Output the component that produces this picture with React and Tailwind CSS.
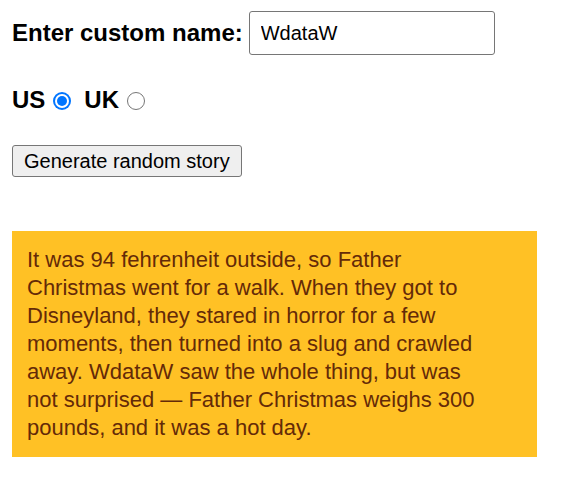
import React, { useState } from "react";

const Radio = ({ checked, onClick }) =>
  checked ? (
    <span
      onClick={onClick}
      className="inline-flex w-[18px] h-[18px] rounded-full bg-[#0075ff] p-[2px] cursor-pointer"
    >
      <span className="flex-1 rounded-full bg-white p-[2px] flex">
        <span className="flex-1 rounded-full bg-[#0075ff]" />
      </span>
    </span>
  ) : (
    <span
      onClick={onClick}
      className="inline-block w-[18px] h-[18px] rounded-full border-[1.5px] border-[#767676] bg-white cursor-pointer"
    />
  );

const App = () => {
  const [name, setName] = useState("WdataW");
  const [country, setCountry] = useState("us");

  return (
    <div className="px-3 pt-[11px] font-['Liberation_Sans',Arial,sans-serif] text-black bg-white min-h-[492px]">
      <div className="flex items-center">
        <label className="font-bold text-[24px] leading-[28px]">Enter custom name:</label>
        <input
          value={name}
          onChange={(e) => setName(e.target.value)}
          className="ml-[6px] w-[246px] h-[44px] border border-[#767676] rounded-[3px] px-[11px] text-[20px] outline-none"
        />
      </div>

      <div className="flex items-center h-[28px] mt-[31px] font-bold text-[24px] leading-[28px]">
        <span>US</span>
        <span className="ml-[8px] mt-[1px] flex">
          <Radio checked={country === "us"} onClick={() => setCountry("us")} />
        </span>
        <span className="ml-[13px]">UK</span>
        <span className="ml-[8px] mt-[1px] flex">
          <Radio checked={country === "uk"} onClick={() => setCountry("uk")} />
        </span>
      </div>

      <button className="block mt-[31px] h-[32px] px-[11px] bg-[#efefef] border border-[#767676] rounded-[3px] text-[20px] leading-[24px]">
        Generate random story
      </button>

      <p className="mt-[54px] w-[525px] bg-[#ffc125] text-[#642a08] text-[22px] leading-[28px] py-[15px] pl-[15px] pr-[48px]">
        It was 94 fehrenheit outside, so Father Christmas went for a walk. When they got to
        Disneyland, they stared in horror for a few moments, then turned into a slug and
        crawled away. WdataW saw the whole thing, but was not surprised — Father Christmas
        weighs 300 pounds, and it was a hot day.
      </p>
    </div>
  );
};

export default App;
